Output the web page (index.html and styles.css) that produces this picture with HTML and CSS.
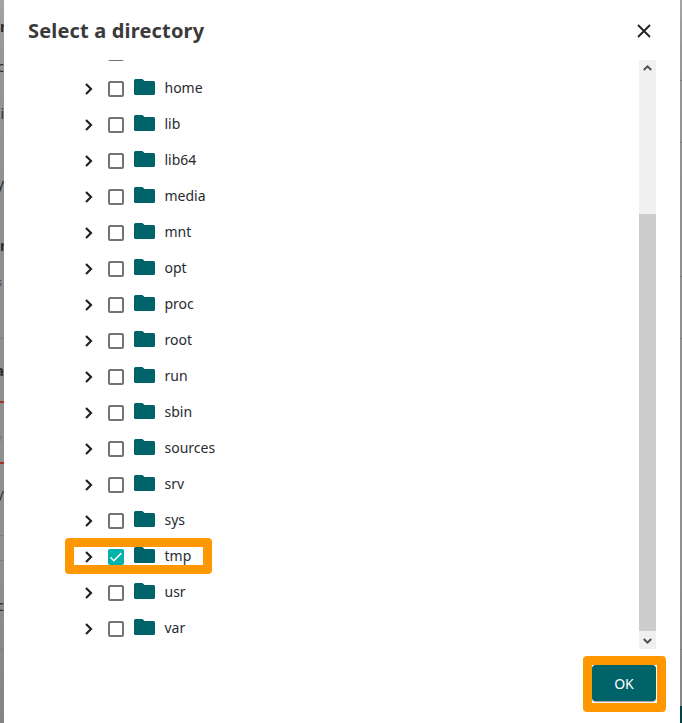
FILE: index.html
```html
<!DOCTYPE html>
<html lang="en">
<head>
<meta charset="utf-8">
<title>Select a directory</title>
<link rel="stylesheet" href="styles.css">
</head>
<body>
<svg class="defs" width="0" height="0">
  <symbol id="chevron" viewBox="0 0 8 12"><path d="M1 1l5 5-5 5" fill="none" stroke="#20242a" stroke-width="2.2"/></symbol>
  <symbol id="folder" viewBox="0 0 21 16"><path d="M1.500 0h7l2 2H19.500Q21 2 21 3.500V14.500Q21 16 19.500 16H1.500Q0 16 0 14.500V1.500Q0 0 1.500 0z" fill="#00636a"/></symbol>
</svg>
<div class="page">
  <div class="behind">
    <span class="bit b1">n</span>
    <span class="bit b2">c</span>
    <span class="bit b3">ci</span>
    <span class="bit b4">y</span>
    <span class="bit b5">r</span>
    <span class="bit b6">s</span>
    <span class="bit b7">a</span>
    <span class="bit b8">e</span>
    <span class="bit b9">/</span>
    <span class="bit b10"></span>
    <span class="bit b11">c</span>
    <span class="bit b12"></span>
  </div>
  <main class="dialog">
    <header class="head">
      <h1>Select a directory</h1>
      <svg class="close" width="14" height="14" viewBox="0 0 14 14"><path d="M1 1l12 12M13 1L1 13" stroke="#20242a" stroke-width="1.9"/></svg>
    </header>
    <section class="body">
      <ul class="tree" id="tree"></ul>
      <div class="scroll">
        <svg width="17" height="17" viewBox="0 0 17 17"><path d="M4.800 10L8.500 6.300l3.700 3.700" fill="none" stroke="#505050" stroke-width="2"/></svg>
        <div class="thumb"></div>
        <svg width="17" height="18" viewBox="0 0 17 18"><path d="M4.800 8L8.500 11.700l3.700-3.700" fill="none" stroke="#505050" stroke-width="2"/></svg>
      </div>
    </section>
    <footer class="foot"><div class="ok-wrap"><button class="ok">OK</button></div></footer>
  </main>
  <div class="edge"><i class="g1"></i><i class="g2"></i><i class="g3"></i><i class="g4"></i><i class="g5"></i><i class="g6"></i></div>
</div>
<script src="tree.js"></script>
</body>
</html>
```
FILE: styles.css
```css
*, *::after { box-sizing: border-box; }
body { margin: 0; font-family: "Noto Sans", "Open Sans", sans-serif; color: #272b30; overflow: hidden; }
.defs { position: absolute; }
.page { display: flex; width: 682px; height: 723px; background: linear-gradient(#a5a5a5 0, #999795 50px, #92908f 200px, #92908f 560px, #858483 723px); }
.behind { width: 4px; height: 723px; overflow: hidden; display: flex; flex-direction: column; align-items: stretch; }
.bit { display: flex; justify-content: flex-end; flex: none; font-size: 14px; line-height: 20px; color: #2b2b2b; overflow: hidden; }
.b1 { height: 56px; padding-top: 17px; font-weight: 700; justify-content: flex-start; }
.b2 { height: 48px; padding-top: 1px; }
.b3 { height: 70px; }
.b4 { height: 62px; }
.b5 { height: 36px; font-weight: 700; justify-content: flex-start; }
.b6 { height: 67px; padding-right: 2px; font-size: 10px; color: #414a66; border-bottom: 1px solid #807e7d; }
.b7 { height: 64px; padding-top: 22px; font-weight: 700; border-bottom: 2px solid #a5322c; }
.b8 { height: 61px; padding: 25px 2px 0 0; font-size: 12px; color: #777; border-bottom: 2px solid #a5322c; }
.b9 { height: 72px; padding-top: 22px; border-bottom: 1px solid #807e7d; }
.b10 { height: 25px; border-bottom: 1px solid #807e7d; }
.b11 { height: 89px; padding-top: 35px; border-bottom: 1px solid #807e7d; }
.b12 { height: 73px; }

.dialog { width: 676px; height: 723px; background: #fff; display: flex; flex-direction: column; }
.head { height: 60px; display: flex; justify-content: space-between; align-items: flex-start; padding: 17px 29px 0 24px; }
h1 { margin: 0; font-size: 20px; line-height: 27px; letter-spacing: .17px; font-weight: 700; color: #3a3a3a; }
.close { margin-top: 7px; }
.body { height: 589px; display: flex; justify-content: space-between; padding-right: 24px; overflow: hidden; }
.tree { list-style: none; margin: -26px 0 0; padding: 0 0 0 81px; }
.row { position: relative; height: 36px; display: flex; align-items: flex-start; font-size: 14px; line-height: 20px; }
.chev { width: 8px; height: 12px; margin-top: 13px; }
.box { width: 16px; height: 16px; margin: 11px 10px 0 15px; border: 2px solid #737373; border-radius: 2px; background: #fff; }
.box.on { border: 0; background: #00b2a9; }
.box svg { display: block; }
.fold { width: 21px; height: 16px; margin-top: 9px; }
.name { margin: 8px 0 0 9.5px; }
.row.marked::after { content: ""; position: absolute; left: -20px; top: 0; width: 147px; height: 36px; border: 9px solid #ff9800; border-radius: 4px; }
.scroll { width: 17px; height: 589px; display: flex; flex-direction: column; background: #f0f0f0; }
.thumb { height: 417px; margin-top: 137px; background: #cdcdcd; }
.foot { display: flex; justify-content: flex-end; padding: 7px 14px 0 0; }
.ok-wrap { width: 83px; height: 56px; border: 9px solid #ff9800; border-radius: 4px; background: #fff; padding: 0 1px 2px 0; }
.ok { display: block; width: 64px; height: 36px; padding: 1px 0 0; border: 0; border-radius: 4px; background: #00636a; color: #fff; font: 14px/36px "Noto Sans", sans-serif; box-shadow: 0 1px 1px #999; }
.edge { width: 2px; display: flex; flex-direction: column; }
.edge i { border-bottom: 1px solid #7b7979; }
.g1 { height: 81px; } .g2 { height: 62px; } .g3 { height: 134px; } .g4 { height: 62px; } .g5 { height: 311px; }
.edge .g6 { height: 17px; margin-top: 56px; border: 0; background: #004448; }
```
FILE: tree.js
```js
const names = ["", "home", "lib", "lib64", "media", "mnt", "opt", "proc", "root", "run", "sbin", "sources", "srv", "sys", "tmp", "usr", "var"];
const tick = '<svg width="16" height="16" viewBox="0 0 16 16"><path d="M2.500 8.300l3.300 3.400 7.500-7.600" fill="none" stroke="#fff" stroke-width="1.500"/></svg>';
document.getElementById("tree").innerHTML = names.map(name => {
  const on = name === "tmp";
  return `<li class="row${on ? " marked" : ""}">
    <svg class="chev"><use href="#chevron"/></svg>
    <span class="box${on ? " on" : ""}">${on ? tick : ""}</span>
    <svg class="fold"><use href="#folder"/></svg>
    <span class="name">${name}</span></li>`;
}).join("");
```
